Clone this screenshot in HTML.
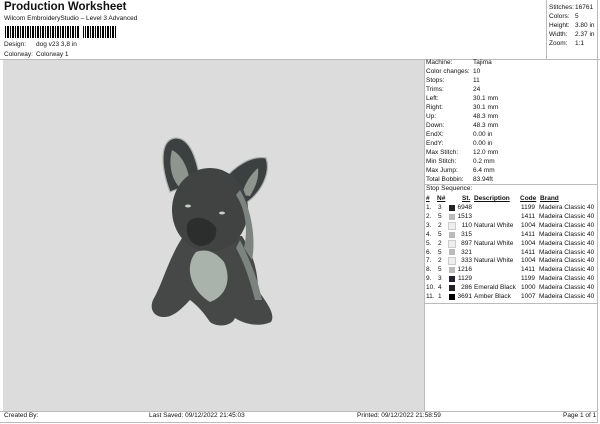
<html><head><style>
body{margin:0;width:600px;height:424px;background:#fff;font-family:"Liberation Sans",sans-serif;color:#111;position:relative;overflow:hidden}
.a{position:absolute;font-size:6.5px;white-space:nowrap;line-height:8px}
</style></head><body>
<div class="a" style="left:4px;top:1px;font-size:11.5px;font-weight:bold;line-height:13px">Production Worksheet</div>
<div class="a" style="left:4px;top:15px">Wilcom EmbroideryStudio – Level 3 Advanced</div>
<div style="position:absolute;left:5px;top:26px;width:111px;height:12px;background:repeating-linear-gradient(90deg,#000 0 1px,#fff 1px 2px,#000 2px 4px,#fff 4px 5px)"></div>
<div style="position:absolute;left:80px;top:26px;width:3px;height:12px;background:#fff"></div>
<div class="a" style="left:4px;top:41px">Design:</div><div class="a" style="left:36px;top:41px">dog v23 3,8 in</div>
<div class="a" style="left:4px;top:51px">Colorway:</div><div class="a" style="left:36px;top:51px">Colorway 1</div>
<div style="position:absolute;left:0;top:59px;width:600px;height:1px;background:#bbb"></div>
<div style="position:absolute;left:546px;top:0;width:1px;height:59px;background:#bbb"></div>
<div style="position:absolute;left:597px;top:0;width:1px;height:422px;background:#bbb"></div>
<div class="a" style="left:549px;top:3px;line-height:9px">Stitches:<br>Colors:<br>Height:<br>Width:<br>Zoom:</div>
<div class="a" style="left:575px;top:3px;line-height:9px">16761<br>5<br>3.80 in<br>2.37 in<br>1:1</div>
<div style="position:absolute;left:3px;top:60px;width:421px;height:352px;background:#dcdcdc"></div>
<svg style="position:absolute;left:0;top:0" width="600" height="424">
<path d="M170 192 C160 165 160 140 175 138 C190 137 197 160 200 180Z" fill="#3d4040" stroke="#a8b0aa" stroke-width="1.2"/>
<path d="M172 150 C168 165 172 180 180 188 L190 182 C188 168 182 155 172 150Z" fill="#8e958f"/>
<path d="M222 182 C234 166 252 155 266 158 C271 172 262 192 246 203Z" fill="#3d4040" stroke="#a8b0aa" stroke-width="1.2"/>
<path d="M258 168 C250 175 244 185 242 195 L250 196 C256 186 259 178 258 168Z" fill="#8e958f"/>
<path d="M182 238 C168 260 162 285 153 300 C148 312 158 320 170 316 C178 313 185 305 190 300 C198 306 204 313 210 322 C218 328 232 326 235 318 C242 323 258 328 271 322 C276 314 266 302 258 290 C258 270 252 252 242 236Z" fill="#454847"/>
<ellipse cx="210" cy="210" rx="38" ry="42" fill="#404342"/>
<path d="M236 195 C246 210 248 230 244 248 L252 260 C256 240 252 210 240 190Z" fill="#7d847f"/>
<path d="M196 252 C184 266 190 290 210 302 C226 296 232 280 224 262 C216 252 206 248 196 252Z" fill="#aab2ac"/>
<path d="M240 240 C250 260 258 280 262 300 L255 300 C250 280 244 262 236 248Z" fill="#7d847f"/>
<path d="M188 222 C184 234 190 244 200 246 C210 246 218 238 216 228 C210 218 196 214 188 222Z" fill="#2c2e2e"/>
<ellipse cx="188" cy="206" rx="3" ry="1.5" fill="#c8ccc6"/><ellipse cx="222" cy="213" rx="3" ry="1.5" fill="#c8ccc6"/>
</svg>
<div class="a" style="left:426px;top:58px;line-height:9px">Machine:<br>Color changes:<br>Stops:<br>Trims:<br>Left:<br>Right:<br>Up:<br>Down:<br>EndX:<br>EndY:<br>Max Stitch:<br>Min Stitch:<br>Max Jump:<br>Total Bobbin:</div>
<div class="a" style="left:473px;top:58px;line-height:9px">Tajima<br>10<br>11<br>24<br>30.1 mm<br>30.1 mm<br>48.3 mm<br>48.3 mm<br>0.00 in<br>0.00 in<br>12.0 mm<br>0.2 mm<br>6.4 mm<br>83.94ft</div>
<div style="position:absolute;left:424px;top:184px;width:173px;height:1px;background:#bbb"></div>
<div style="position:absolute;left:424px;top:60px;width:1px;height:352px;background:#bbb"></div>
<div class="a" style="left:426px;top:185px">Stop Sequence:</div>
<div class="a" style="left:426px;top:195px;font-weight:bold;text-decoration:underline">#</div>
<div class="a" style="left:437px;top:195px;font-weight:bold;text-decoration:underline">N#</div>
<div class="a" style="left:462px;top:195px;font-weight:bold;text-decoration:underline">St.</div>
<div class="a" style="left:474px;top:195px;font-weight:bold;text-decoration:underline">Description</div>
<div class="a" style="left:520px;top:195px;font-weight:bold;text-decoration:underline">Code</div>
<div class="a" style="left:540px;top:195px;font-weight:bold;text-decoration:underline">Brand</div>
<div class="a" style="left:426px;top:204px;line-height:8.9px">1.<br>2.<br>3.<br>4.<br>5.<br>6.<br>7.<br>8.<br>9.<br>10.<br>11.</div>
<div class="a" style="left:438px;top:204px;line-height:8.9px">3<br>5<br>2<br>5<br>2<br>5<br>2<br>5<br>3<br>4<br>1</div>
<div style="position:absolute;left:449px;top:205px;width:6px">
<div style="height:6px;margin-bottom:2.9px;background:#222"></div><div style="height:6px;margin-bottom:2.9px;background:#bbb"></div><div style="height:6px;margin-bottom:2.9px;background:#eee;outline:1px solid #ccc"></div><div style="height:6px;margin-bottom:2.9px;background:#bbb"></div><div style="height:6px;margin-bottom:2.9px;background:#eee;outline:1px solid #ccc"></div><div style="height:6px;margin-bottom:2.9px;background:#bbb"></div><div style="height:6px;margin-bottom:2.9px;background:#eee;outline:1px solid #ccc"></div><div style="height:6px;margin-bottom:2.9px;background:#bbb"></div><div style="height:6px;margin-bottom:2.9px;background:#223"></div><div style="height:6px;margin-bottom:2.9px;background:#222"></div><div style="height:6px;background:#000"></div></div>
<div class="a" style="left:455px;top:204px;width:17px;text-align:right;line-height:8.9px">6948<br>1513<br>110<br>315<br>897<br>321<br>333<br>1216<br>1129<br>286<br>3691</div>
<div class="a" style="left:474px;top:204px;line-height:8.9px"><br><br>Natural White<br><br>Natural White<br><br>Natural White<br><br><br>Emerald Black<br>Amber Black</div>
<div class="a" style="left:521px;top:204px;line-height:8.9px">1199<br>1411<br>1004<br>1411<br>1004<br>1411<br>1004<br>1411<br>1199<br>1000<br>1007</div>
<div class="a" style="left:539px;top:204px;line-height:8.9px">Madeira Classic 40<br>Madeira Classic 40<br>Madeira Classic 40<br>Madeira Classic 40<br>Madeira Classic 40<br>Madeira Classic 40<br>Madeira Classic 40<br>Madeira Classic 40<br>Madeira Classic 40<br>Madeira Classic 40<br>Madeira Classic 40</div>
<div style="position:absolute;left:424px;top:303px;width:173px;height:1px;background:#bbb"></div>
<div style="position:absolute;left:0;top:411px;width:598px;height:10px;border-top:1px solid #bbb;border-bottom:1px solid #bbb"></div>
<div class="a" style="left:4px;top:412px">Created By:</div>
<div class="a" style="left:149px;top:412px">Last Saved: 09/12/2022 21:45:03</div>
<div class="a" style="left:357px;top:412px">Printed: 09/12/2022 21:58:59</div>
<div class="a" style="left:563px;top:412px">Page 1 of 1</div>
</body></html>
